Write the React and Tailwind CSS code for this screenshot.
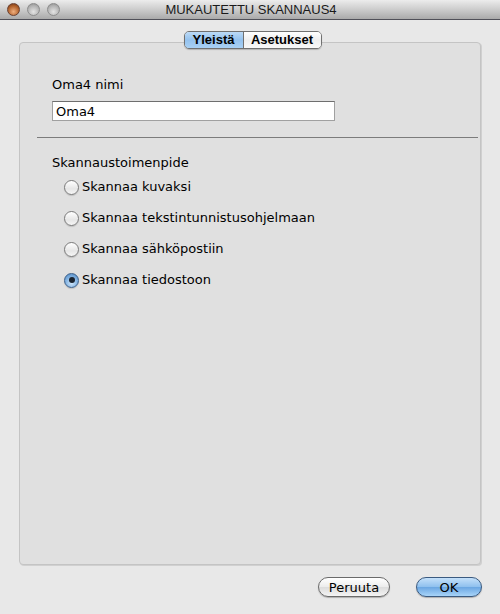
import React, { useState } from "react";

const font = { fontFamily: '"DejaVu Sans", "Liberation Sans", sans-serif' };
const tabFont = { fontFamily: '"Liberation Sans", "DejaVu Sans", sans-serif' };

const Light = ({ color }) => (
  <span
    className={`w-[13px] h-[13px] rounded-full border ${
      color === "red"
        ? "bg-[radial-gradient(circle_at_50%_70%,#f0b080,#b0602a_60%,#6a3010)] border-[#6a4030]"
        : "bg-[radial-gradient(circle_at_50%_70%,#e4e4e4,#b4b4b4_60%,#8a8a8a)] border-[#8c8c8c]"
    }`}
  />
);

const Radio = ({ checked, label, onClick }) => (
  <button onClick={onClick} className="flex items-center gap-[3px] h-[16px] text-[13px] text-black">
    <span
      className={`w-[15px] h-[15px] rounded-full border flex items-center justify-center shadow-[0_1px_1px_rgba(0,0,0,0.15)] ${
        checked
          ? "border-[#3a5f8a] bg-[radial-gradient(circle_at_50%_70%,#cfe6fb,#7fb0e0_55%,#4f86c0)]"
          : "border-[#7a7a7a] bg-[linear-gradient(#ffffff,#e6e6e6_60%,#f6f6f6)]"
      }`}
    >
      {checked && <span className="w-[6px] h-[6px] rounded-full bg-[#1a2430]" />}
    </span>
    <span>{label}</span>
  </button>
);

export default function App() {
  const [tab, setTab] = useState(0);
  const [sel, setSel] = useState(3);
  const options = [
    "Skannaa kuvaksi",
    "Skannaa tekstintunnistusohjelmaan",
    "Skannaa sähköpostiin",
    "Skannaa tiedostoon",
  ];
  const on = "bg-[linear-gradient(#bcdaf6,#94c2ee_50%,#a8d0f4)]";
  const off = "bg-[linear-gradient(#ffffff,#eeeeee_50%,#f8f8f8)]";

  return (
    <div className="w-[500px] h-[614px] bg-[#e8e8e8] flex flex-col" style={font}>
      <div className="h-[20px] flex items-center relative bg-[linear-gradient(#ececec,#cccccc_50%,#aaaaaa)] border-b border-[#505058]">
        <div className="flex gap-[7px] pl-[7px]">
          <Light color="red" />
          <Light />
          <Light />
        </div>
        <div
          className="absolute inset-0 flex items-center justify-center pl-[2px] text-[13px] text-[#1a1a1a]"
          style={tabFont}
        >
          MUKAUTETTU SKANNAUS4
        </div>
      </div>

      <div className="relative mx-[19px] mt-[22px] h-[523px]">
        <div className="absolute inset-0 rounded-[4px] border border-[#c4c4c4] bg-[#e0e0e0] shadow-[1px_1px_0_#d0d0d0]" />
        <div className="absolute -top-[11px] left-0 right-0 flex justify-center">
          <div
            className="flex rounded-[5px] border border-[#707070] overflow-hidden text-[13px] font-bold h-[18px] ml-[5px] shadow-[0_1px_1px_rgba(0,0,0,0.2)]"
            style={tabFont}
          >
            <button
              onClick={() => setTab(0)}
              className={`w-[59px] flex items-center justify-center border-r border-[#707070] text-black ${tab === 0 ? on : off}`}
            >
              Yleistä
            </button>
            <button
              onClick={() => setTab(1)}
              className={`w-[77px] flex items-center justify-center text-black ${tab === 1 ? on : off}`}
            >
              Asetukset
            </button>
          </div>
        </div>

        <div className="relative flex flex-col pt-[35px]">
          <div className="pl-[33px] text-[13px] text-black leading-[16px]">Oma4 nimi</div>
          <div className="pl-[33px] mt-[8px] flex">
            <input
              defaultValue="Oma4"
              className="block w-[283px] h-[20px] bg-white border border-[#a0a0a0] border-t-[#6e6e6e] px-[3px] text-[13px] outline-none"
              style={font}
            />
          </div>
          <div className="ml-[18px] mr-[3px] mt-[16px] h-px bg-[#7c7c7c]" />
          <div className="pl-[33px] mt-[17px] text-[13px] text-black leading-[16px]">Skannaustoimenpide</div>
          <div className="pl-[45px] mt-[8px] flex flex-col items-start gap-[15px]">
            {options.map((o, i) => (
              <Radio key={o} label={o} checked={sel === i} onClick={() => setSel(i)} />
            ))}
          </div>
        </div>
      </div>

      <div className="flex justify-end gap-[26px] pr-[18px] mt-[12px]">
        <button className="w-[72px] h-[20px] rounded-full border border-[#6a6a6a] bg-[linear-gradient(#ffffff,#ececec_50%,#dcdcdc_51%,#f4f4f4)] text-[13px] text-black shadow-[0_1px_1px_rgba(0,0,0,0.25)]">
          Peruuta
        </button>
        <button className="w-[66px] h-[20px] rounded-full border border-[#3a5a80] bg-[linear-gradient(#c4e0fa,#8ec0ee_50%,#6aa6e2_51%,#a8d4f8)] text-[13px] text-black shadow-[0_1px_1px_rgba(0,0,0,0.25)]">
          OK
        </button>
      </div>
    </div>
  );
}
